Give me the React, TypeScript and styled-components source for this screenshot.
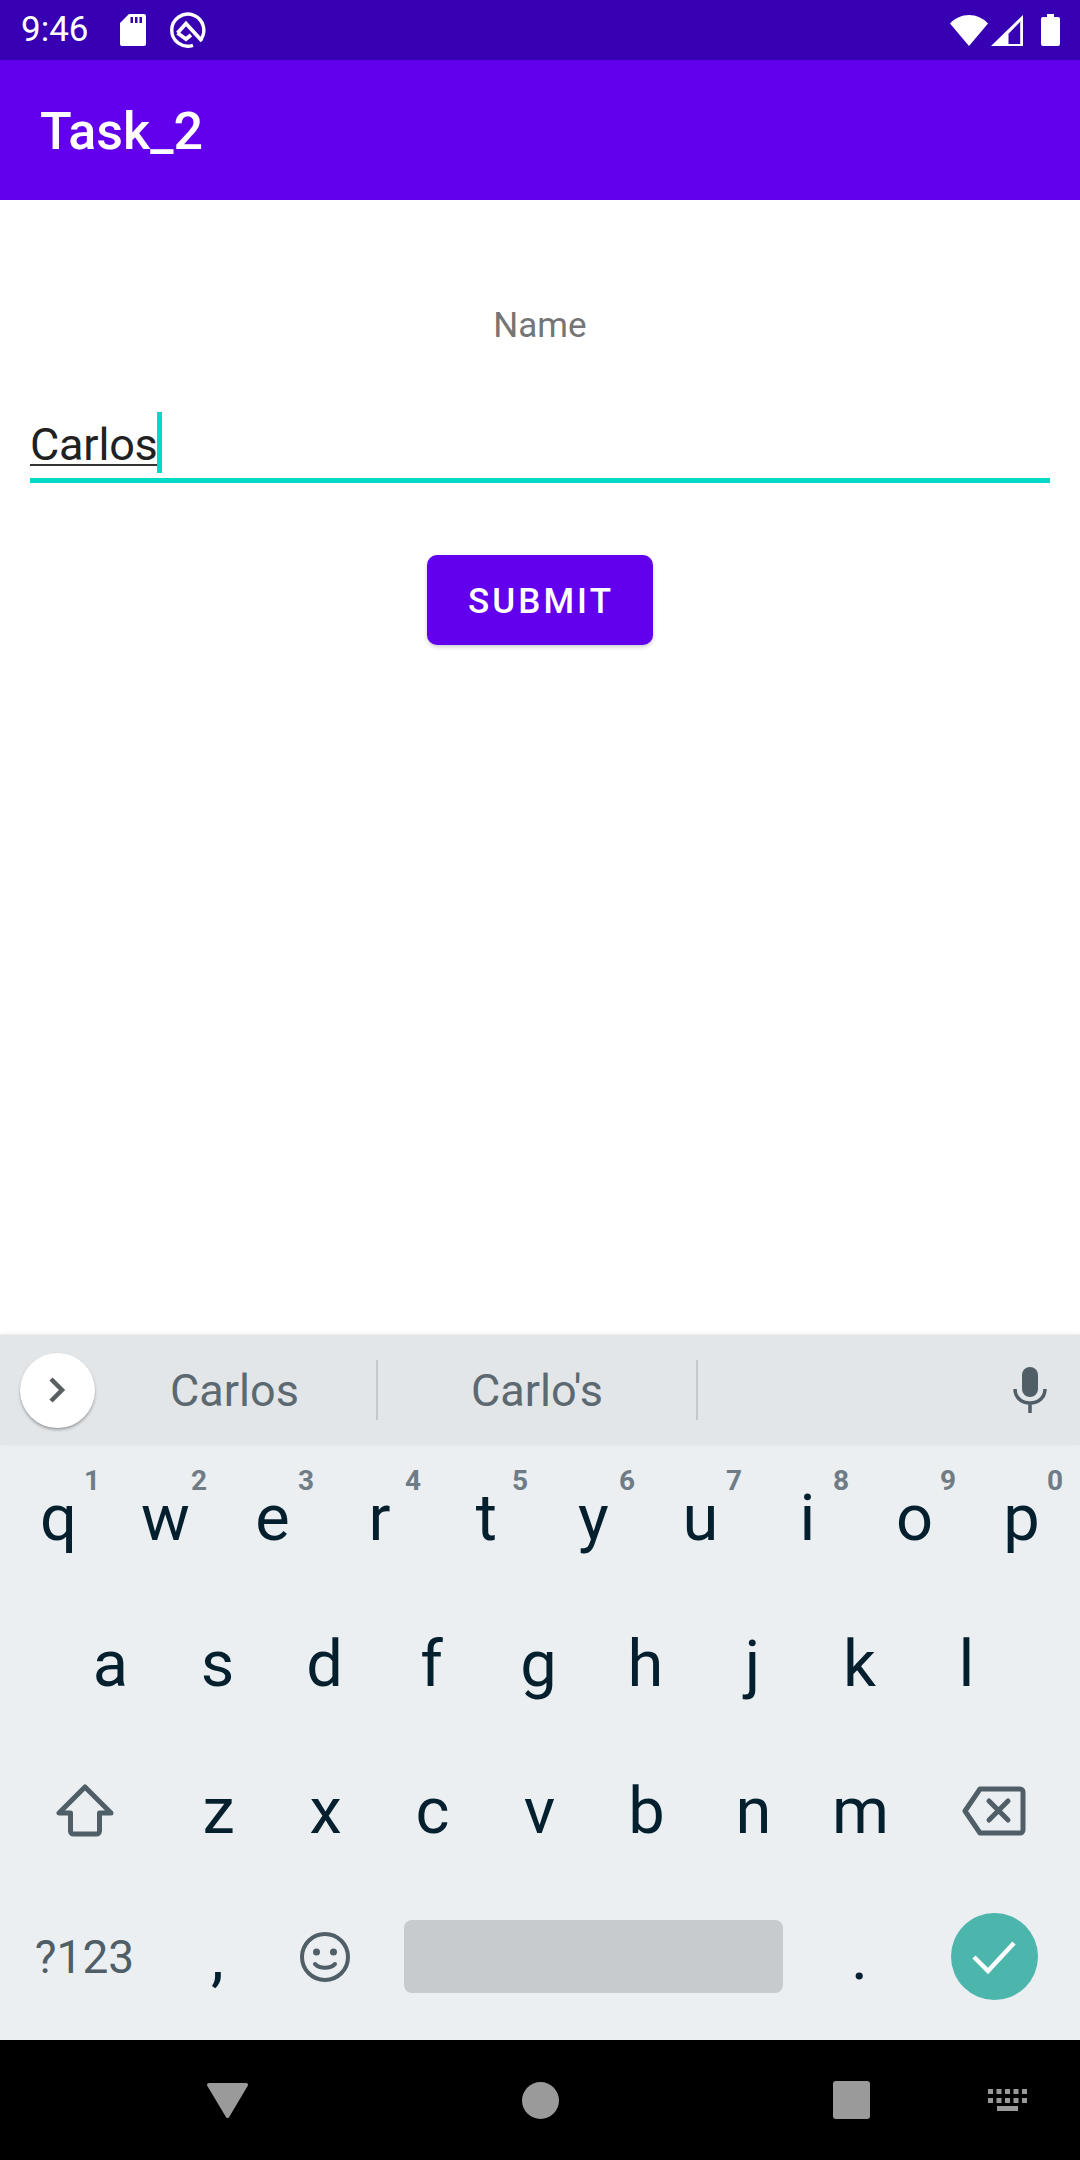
import React from "react";
import styled, { createGlobalStyle } from "styled-components";

const Global = createGlobalStyle`
  html, body { margin: 0; padding: 0; background: #fff; }
  body { font-family: Roboto, "Liberation Sans", sans-serif; }
`;

const Page = styled.div`
  width: 1080px;
  height: 2160px;
  display: flex;
  flex-direction: column;
  overflow: hidden;
`;

const StatusBar = styled.div`
  height: 60px;
  background: #3700b3;
  display: flex;
  align-items: center;
  color: #fff;
  padding: 0 20px 0 21px;
  flex: none;
`;
const Time = styled.span`
  font-size: 35px;
  width: 99px;
  line-height: 60px;
`;
const StatusLeft = styled.div`
  display: flex;
  align-items: center;
  gap: 24px;
`;
const StatusRight = styled.div`
  margin-left: auto;
  display: flex;
  align-items: center;
  gap: 3px;
`;
const BatteryIcon = styled.svg`
  margin-left: 15px;
`;
const AppBar = styled.div`
  height: 140px;
  background: #6200ee;
  display: flex;
  align-items: center;
  padding: 3px 0 0 40px;
  box-sizing: border-box;
  color: #fff;
  font-size: 52px;
  font-weight: 500;
  flex: none;
`;
const Content = styled.main`
  flex: 1;
  background: #fff;
  padding: 0 30px;
  display: flex;
  flex-direction: column;
  align-items: center;
`;
const Label = styled.div`
  margin-top: 106px;
  height: 40px;
  line-height: 40px;
  font-size: 35px;
  color: #757575;
`;
const Field = styled.div`
  align-self: stretch;
  margin-top: 66px;
  height: 66px;
  display: flex;
  align-items: flex-start;
  border-bottom: 5px solid #03dac5;
  box-sizing: content-box;
`;
const Composing = styled.span`
  height: 51px;
  line-height: 64px;
  margin-top: 1px;
  font-size: 45px;
  letter-spacing: -0.2px;
  color: #212121;
  border-bottom: 2px solid #333;
  box-sizing: content-box;
`;
const Caret = styled.span`
  width: 5px;
  height: 61px;
  background: #03dac5;
  margin-left: -1px;
`;
const SubmitButton = styled.button`
  margin-top: 72px;
  width: 226px;
  height: 90px;
  border: 0;
  border-radius: 10px;
  background: #6200ee;
  color: #fff;
  font-family: Roboto, sans-serif;
  font-size: 35px;
  font-weight: 500;
  letter-spacing: 3.1px;
  box-shadow: 0 2px 4px rgba(0, 0, 0, 0.2);
  padding: 2px 0 0 2px;
`;

const Keyboard = styled.section`
  height: 705px;
  flex: none;
  background: #ebeff2;
  display: flex;
  flex-direction: column;
`;
const Suggestions = styled.div`
  height: 110px;
  flex: none;
  background: #e2e6e9;
  display: grid;
  grid-template-columns: 107px 271px 320px 1fr;
  align-items: center;
  box-shadow: 0 -1px 3px rgba(0, 0, 0, 0.1);
  position: relative;
`;
const ExpandButton = styled.div`
  width: 75px;
  height: 75px;
  margin-left: 20px;
  border-radius: 50%;
  background: #fff;
  box-shadow: 0 2px 3px rgba(0, 0, 0, 0.3);
  display: flex;
  align-items: center;
  justify-content: center;
`;
const Suggestion = styled.div<{ $inset?: number }>`
  height: 60px;
  line-height: 62px;
  text-align: center;
  font-size: 45px;
  color: #5c6970;
  border-right: 2px solid #c4c8cb;
  padding-right: ${(p) => p.$inset ?? 0}px;
`;
const MicSlot = styled.div`
  display: flex;
  justify-content: flex-end;
  padding-right: 33px;
`;
const Rows = styled.div`
  flex: 1;
  display: flex;
  flex-direction: column;
  padding: 0 5px 10px;
`;
const Row = styled.div<{ $inset?: number }>`
  flex: 1;
  display: flex;
  align-items: center;
  padding: 0 ${(p) => p.$inset ?? 0}px;
`;
const Key = styled.div<{ $w?: number }>`
  position: relative;
  flex: none;
  width: ${(p) => p.$w ?? 107}px;
  height: 100%;
  display: flex;
  align-items: center;
  justify-content: center;
  font-size: 65px;
  color: #04202e;
`;
const Hint = styled.span`
  position: absolute;
  right: 12px;
  top: 19px;
  font-size: 28px;
  font-weight: 700;
  color: #6f7c85;
`;
const ModeLabel = styled.span`
  font-size: 46px;
  color: #4f5e67;
`;
const SpaceBar = styled.div`
  width: 379px;
  height: 73px;
  border-radius: 8px;
  background: #c7cbce;
  margin-left: 3px;
`;
const EnterButton = styled.div`
  width: 87px;
  height: 87px;
  border-radius: 50%;
  background: #4db6ac;
  display: flex;
  align-items: center;
  justify-content: center;
`;
const NavBar = styled.nav`
  height: 120px;
  flex: none;
  background: #000;
  display: flex;
  align-items: center;
  padding-left: 207px;
`;
const NavMain = styled.div`
  display: flex;
  align-items: center;
  gap: 274px;
`;
const NavKeyboard = styled.div`
  margin-left: 118px;
  display: flex;
`;

const row1: [string, string][] = [
  ["q", "1"], ["w", "2"], ["e", "3"], ["r", "4"], ["t", "5"],
  ["y", "6"], ["u", "7"], ["i", "8"], ["o", "9"], ["p", "0"],
];
const row2 = ["a", "s", "d", "f", "g", "h", "j", "k", "l"];
const row3 = ["z", "x", "c", "v", "b", "n", "m"];

export default function App() {
  return (
    <Page>
      <Global />
      <StatusBar>
        <Time>9:46</Time>
        <StatusLeft>
          <svg width="26" height="32" viewBox="0 0 26 32">
            <path d="M9 0h15a2 2 0 0 1 2 2v28a2 2 0 0 1-2 2H2a2 2 0 0 1-2-2V9z" fill="#fff" />
            <path d="M10.500 3h2.500v6h-2.500zM15 3h2.500v6H15zM19.500 3H22v6h-2.500z" fill="#3700b3" />
          </svg>
          <svg width="36" height="36" viewBox="0 0 36 36" fill="none">
            <path d="M30 28.500A16 16 0 1 0 23 33.300" stroke="#fff" strokeWidth="3.400" />
            <path d="M7.500 21L16 11.500 32 29" stroke="#fff" strokeWidth="3.800" />
            <path d="M7.500 21L16 27l5-4" stroke="#fff" strokeWidth="3.800" />
          </svg>
        </StatusLeft>
        <StatusRight>
          <svg width="38" height="31" viewBox="0 0 38 31">
            <path d="M0 8.500C5 3 12 0 19 0s14 3 19 8.500L19 31z" fill="#fff" />
          </svg>
          <svg width="32" height="31" viewBox="0 0 32 31">
            <path fillRule="evenodd" d="M32 0v31H0zM30 6L17.500 18.800V29H30z" fill="#fff" />
            <path d="M30 6v23h-1V7z" fill="#d9ccf0" />
          </svg>
          <BatteryIcon width="19" height="32" viewBox="0 0 19 32">
            <path d="M6 0h7v3h4a2 2 0 0 1 2 2v25a2 2 0 0 1-2 2H2a2 2 0 0 1-2-2V5a2 2 0 0 1 2-2h4z" fill="#fff" />
          </BatteryIcon>
        </StatusRight>
      </StatusBar>
      <AppBar>Task_2</AppBar>
      <Content>
        <Label>Name</Label>
        <Field>
          <Composing>Carlos</Composing>
          <Caret />
        </Field>
        <SubmitButton>SUBMIT</SubmitButton>
      </Content>
      <Keyboard>
        <Suggestions>
          <ExpandButton>
            <svg width="22" height="28" viewBox="0 0 22 28" fill="none">
              <path d="M4 3l11 11L4 25" stroke="#5a5f62" strokeWidth="4.500" />
            </svg>
          </ExpandButton>
          <Suggestion $inset={14}>Carlos</Suggestion>
          <Suggestion>Carlo's</Suggestion>
          <MicSlot>
            <svg width="34" height="46" viewBox="0 0 34 46" fill="none">
              <rect x="9" y="0" width="16" height="30" rx="8" fill="#4f5e67" />
              <path d="M2 22c0 9 7 14 15 14s15-5 15-14M17 36v10" stroke="#4f5e67" strokeWidth="3.500" />
            </svg>
          </MicSlot>
        </Suggestions>
        <Rows>
          <Row>
            {row1.map(([k, h]) => (
              <Key key={k}>
                {k}
                <Hint>{h}</Hint>
              </Key>
            ))}
          </Row>
          <Row $inset={52}>
            {row2.map((k) => (
              <Key key={k}>{k}</Key>
            ))}
          </Row>
          <Row>
            <Key $w={160}>
              <svg width="58" height="54" viewBox="0 0 58 54" fill="none">
                <path
                  d="M29 3L3 29h11.500v18a3 3 0 0 0 3 3h23a3 3 0 0 0 3-3V29H55z"
                  stroke="#4f5e67"
                  strokeWidth="5"
                  strokeLinejoin="round"
                />
              </svg>
            </Key>
            {row3.map((k) => (
              <Key key={k}>{k}</Key>
            ))}
            <Key $w={160}>
              <svg width="64" height="50" viewBox="0 0 64 50" fill="none">
                <path
                  d="M18 3h40a3 3 0 0 1 3 3v38a3 3 0 0 1-3 3H18L3 25z"
                  stroke="#4f5e67"
                  strokeWidth="5"
                  strokeLinejoin="round"
                />
                <path d="M27 15l19 19M46 15L27 34" stroke="#4f5e67" strokeWidth="5" strokeLinecap="round" />
              </svg>
            </Key>
          </Row>
          <Row>
            <Key $w={159}>
              <ModeLabel>?123</ModeLabel>
            </Key>
            <Key>,</Key>
            <Key>
              <svg width="50" height="50" viewBox="0 0 50 50" fill="none">
                <circle cx="25" cy="25" r="23" stroke="#4f5e67" strokeWidth="4" />
                <circle cx="16.500" cy="20" r="3.500" fill="#4f5e67" />
                <circle cx="33.500" cy="20" r="3.500" fill="#4f5e67" />
                <path d="M15 32c5 5 15 5 20 0" stroke="#4f5e67" strokeWidth="4" strokeLinecap="round" />
              </svg>
            </Key>
            <Key $w={428}>
              <SpaceBar />
            </Key>
            <Key>.</Key>
            <Key $w={162}>
              <EnterButton>
                <svg width="44" height="34" viewBox="0 0 44 34" fill="none">
                  <path d="M2 17l14 14L42 3" stroke="#fff" strokeWidth="4.500" />
                </svg>
              </EnterButton>
            </Key>
          </Row>
        </Rows>
      </Keyboard>
      <NavBar>
        <NavMain>
          <svg width="41" height="35" viewBox="0 0 41 35">
            <path d="M2 0h37a2 2 0 0 1 1.900 2.600L22.500 33.500a2 2 0 0 1-3.900 0L.1 2.600A2 2 0 0 1 2 0z" fill="#9a9a9a" />
          </svg>
          <svg width="37" height="37" viewBox="0 0 37 37">
            <circle cx="18.500" cy="18.500" r="18.500" fill="#9a9a9a" />
          </svg>
          <svg width="37" height="38" viewBox="0 0 37 38">
            <rect width="37" height="38" rx="3" fill="#9a9a9a" />
          </svg>
        </NavMain>
        <NavKeyboard>
          <svg width="39" height="22" viewBox="0 0 39 22" fill="#9a9a9a">
            <path d="M0 0h5v5H0zM8.500 0h5v5h-5zM17 0h5v5h-5zM25.500 0h5v5h-5zM34 0h5v5h-5zM0 9h5v5H0zM8.500 9h5v5h-5zM17 9h5v5h-5zM25.500 9h5v5h-5zM34 9h5v5h-5zM9 17h21v5H9z" />
          </svg>
        </NavKeyboard>
      </NavBar>
    </Page>
  );
}
